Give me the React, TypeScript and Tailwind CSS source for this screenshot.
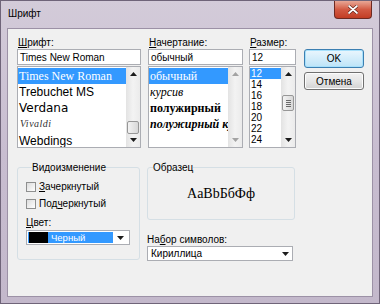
import React from "react";

const ui = "font-['Liberation_Sans',Arial,sans-serif]";
const serif = "font-['Liberation_Serif','Times_New_Roman',serif]";

const Arrow = ({ up = false, grey = false }: { up?: boolean; grey?: boolean }) => (
  <svg width="7" height="4" viewBox="0 0 7 4">
    <path d={up ? "M0 4 L3.5 0 L7 4 Z" : "M0 0 L7 0 L3.5 4 Z"} fill={grey ? "#a3a3a3" : "#1c1c1c"} />
  </svg>
);

const ScrollBar = ({
  thumbOffset,
  thumbHeight,
  grip = false,
  disabled = false,
}: {
  thumbOffset?: number;
  thumbHeight?: number;
  grip?: boolean;
  disabled?: boolean;
}) => (
  <div className="flex w-[14px] shrink-0 flex-col bg-gradient-to-r from-[#e3e3e3] via-[#f3f3f3] to-[#ebebeb]">
    <div className="flex h-[14px] items-center justify-center">
      <Arrow up grey={disabled} />
    </div>
    <div className="flex flex-1 flex-col px-[1px]">
      {thumbHeight ? (
        <>
          <div style={{ height: thumbOffset }} />
          <div
            className="flex flex-col items-center justify-center gap-[1px] rounded-[2px] border border-[#979797] bg-gradient-to-r from-[#f3f3f3] to-[#d8d8d8]"
            style={{ height: thumbHeight }}
          >
            {grip ? (
              <>
                <div className="h-[1px] w-[5px] bg-[#6b6b6b]" />
                <div className="h-[1px] w-[5px] bg-[#6b6b6b]" />
                <div className="h-[1px] w-[5px] bg-[#6b6b6b]" />
                <div className="h-[1px] w-[5px] bg-[#6b6b6b]" />
              </>
            ) : null}
          </div>
        </>
      ) : null}
    </div>
    <div className="flex h-[14px] items-center justify-center">
      <Arrow grey={disabled} />
    </div>
  </div>
);

const Label = ({ accel, rest }: { accel: string; rest: string }) => (
  <div className="h-[11px] pl-[1px] text-[10px] leading-[11px] text-black">
    <span className="underline underline-offset-[1px]">{accel}</span>
    {rest}
  </div>
);

const CheckRow = ({ before, accel, after }: { before: string; accel: string; after: string }) => (
  <div className="flex h-[10px] items-center gap-[3px]">
    <div className="h-[10px] w-[10px] border border-[#8e8f8f] bg-gradient-to-br from-[#dcdcdc] to-white" />
    <span className="text-[10px] leading-[10px] text-black">
      {before}
      <span className="underline underline-offset-[1px]">{accel}</span>
      {after}
    </span>
  </div>
);

export default function App() {
  return (
    <div
      className={`${ui} relative h-[304px] w-[380px] overflow-hidden border border-[#6f6479] bg-gradient-to-b from-[#d3cbd9] via-[#c8bdd0] to-[#c3b8cb]`}
    >
      <div className="flex h-[27px] items-start justify-between">
        <div className="pl-[7px] pt-[7px] text-[10px] leading-[12px] text-black">Шрифт</div>
        <div className="mr-[7px] flex h-[18px] w-[38px] items-center justify-center rounded-b-[4px] border border-t-0 border-[#6d2a22] bg-gradient-to-b from-[#e8a796] via-[#d25a43] to-[#c23d24]">
          <svg width="10" height="9" viewBox="0 0 10 9">
            <path d="M1 1 L9 8 M9 1 L1 8" stroke="#5a1a10" strokeWidth="3" strokeLinecap="round" />
            <path d="M1 1 L9 8 M9 1 L1 8" stroke="#ffffff" strokeWidth="1.7" strokeLinecap="round" />
          </svg>
        </div>
      </div>

      <div className="ml-[6px] h-[269px] w-[366px] border border-[#9c91a6] bg-[#f0f0f0] pl-[9px] pt-[8px]">
        <div className="flex">
          <div className="w-[124px]">
            <Label accel="Ш" rest="рифт:" />
            <div className="mt-[1px] flex h-[16px] items-center border border-[#abadb3] bg-white pl-[2px] text-[10px] text-black">
              Times New Roman
            </div>
            <div className="mt-[1px] flex h-[82px] border border-[#abadb3] bg-white">
              <div className={`${serif} flex-1 overflow-hidden whitespace-nowrap pt-[1px]`}>
                <div className="h-[16px] bg-[#3399ff] pl-[1px] text-[12px] leading-[16px] text-white">Times New Roman</div>
                <div className="h-[16px] pl-[1px] font-['Liberation_Sans',sans-serif] text-[12px] leading-[16px] text-black">Trebuchet MS</div>
                <div className="h-[16px] pl-[1px] font-['DejaVu_Sans',sans-serif] text-[12px] leading-[16px] text-black">Verdana</div>
                <div className="h-[16px] pl-[2px] text-[10px] italic leading-[16px] tracking-[0.5px] text-[#333]">Vivaldi</div>
                <div className="h-[16px] pl-[1px] font-['Liberation_Sans',sans-serif] text-[12px] leading-[18px] text-black">Webdings</div>
              </div>
              <ScrollBar thumbOffset={40} thumbHeight={13} />
            </div>
          </div>

          <div className="ml-[7px] w-[95px]">
            <Label accel="Н" rest="ачертание:" />
            <div className="mt-[1px] flex h-[16px] items-center border border-[#abadb3] bg-white pl-[2px] text-[10px] text-black">
              обычный
            </div>
            <div className="mt-[1px] flex h-[82px] border border-[#abadb3] bg-white">
              <div className={`${serif} flex-1 overflow-hidden whitespace-nowrap pt-[1px] text-[12px] leading-[16px] text-black`}>
                <div className="h-[16px] bg-[#3399ff] pl-[1px] text-white">обычный</div>
                <div className="h-[16px] pl-[1px] italic">курсив</div>
                <div className="h-[16px] pl-[1px] font-bold">полужирный</div>
                <div className="h-[16px] pl-[1px] font-bold italic">полужирный курсив</div>
              </div>
              <ScrollBar disabled />
            </div>
          </div>

          <div className="ml-[6px] w-[47px]">
            <Label accel="Р" rest="азмер:" />
            <div className="mt-[1px] flex h-[16px] items-center border border-[#abadb3] bg-white pl-[2px] text-[10px] text-black">
              12
            </div>
            <div className="mt-[1px] flex h-[82px] border border-[#abadb3] bg-white">
              <div className="flex-1 overflow-hidden pt-[1px] text-[10px] leading-[11px] text-black">
                <div className="h-[11px] bg-[#3399ff] pl-[1px] text-white">12</div>
                {["14", "16", "18", "20", "22", "24"].map((size) => (
                  <div key={size} className="h-[11px] pl-[1px]">
                    {size}
                  </div>
                ))}
              </div>
              <ScrollBar thumbOffset={14} thumbHeight={16} grip />
            </div>
          </div>

          <div className="ml-[8px] flex w-[60px] flex-col gap-[4px] pt-[12px]">
            <div className="flex h-[19px] items-center justify-center rounded-[3px] border border-[#3c7fb1] bg-gradient-to-b from-[#eaf6fd] to-[#bde4f8] text-[10px] text-black shadow-[inset_0_0_0_1px_#a7e0fb]">
              OK
            </div>
            <div className="flex h-[18px] items-center justify-center rounded-[3px] border border-[#707070] bg-gradient-to-b from-[#f2f2f2] via-[#e6e6e6] to-[#d2d2d2] text-[10px] text-black shadow-[inset_0_0_0_1px_#fcfcfc]">
              Отмена
            </div>
          </div>
        </div>

        <div className="mt-[14px] flex">
          <fieldset className="h-[98px] w-[123px] rounded-[3px] border border-[#d5dfe5] pl-[8px]">
            <legend className="ml-[6px] px-0 text-[10px] leading-[11px] text-black">Видоизменение</legend>
            <div className="flex flex-col gap-[7px] pt-[9px]">
              <CheckRow before="" accel="З" after="ачеркнутый" />
              <CheckRow before="Под" accel="ч" after="еркнутый" />
            </div>
            <div className="mt-[8px] h-[11px] text-[10px] leading-[11px] text-black">
              <span className="underline underline-offset-[1px]">Ц</span>вет:
            </div>
            <div className="mt-[2px] flex h-[15px] w-[104px] items-center border border-[#abadb3] bg-white p-[1px]">
              <div className="flex h-full w-[85px] items-center bg-[#3399ff]">
                <div className="ml-[1px] h-[11px] w-[19px] bg-black" />
                <span className="pl-[3px] text-[9.5px] leading-[10px] text-white">Черный</span>
              </div>
              <div className="flex flex-1 items-center justify-center">
                <Arrow />
              </div>
            </div>
          </fieldset>

          <div className="ml-[7px] w-[148px]">
            <fieldset className="h-[58px] rounded-[3px] border border-[#d5dfe5]">
              <legend className="ml-[5px] px-0 text-[10px] leading-[11px] text-black">Образец</legend>
              <div className={`${serif} flex h-[40px] items-center justify-center pt-[1px] text-[14px] text-black`}>
                AaBbБбФф
              </div>
            </fieldset>
            <div className="mt-[14px] h-[11px] text-[10px] leading-[11px] text-black">
              На<span className="underline underline-offset-[1px]">б</span>ор символов:
            </div>
            <div className="mt-[1px] flex h-[15px] w-[146px] items-center border border-[#abadb3] bg-white pl-[3px] text-[10px] text-black">
              <span className="flex-1">Кириллица</span>
              <div className="flex w-[14px] items-center justify-center">
                <Arrow />
              </div>
            </div>
          </div>
        </div>
      </div>
    </div>
  );
}
